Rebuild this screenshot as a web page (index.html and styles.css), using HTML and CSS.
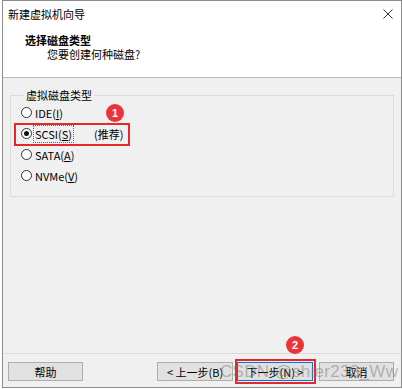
FILE: index.html
```html
<!DOCTYPE html>
<html lang="zh-CN">
<head>
<meta charset="utf-8">
<title>新建虚拟机向导</title>
<link rel="stylesheet" href="styles.css">
</head>
<body>
<div class="window">
  <div class="header">
    <div class="titlebar">
      <span class="title">新建虚拟机向导</span>
      <svg class="close" width="10" height="10" viewBox="0 0 10 10"><path d="M0.5 0.5 L9.5 9.5 M9.5 0.5 L0.5 9.5" stroke="#333" stroke-width="1" fill="none"/></svg>
    </div>
    <div class="heading">选择磁盘类型</div>
    <div class="subheading">您要创建何种磁盘?</div>
  </div>
  <div class="main">
    <fieldset class="group">
      <legend>虚拟磁盘类型</legend>
      <div class="row"><span class="radio"></span><span class="label">IDE(<u>I</u>)</span></div>
      <div class="row"><span class="radio checked"></span><span class="label focus">SCSI(<u>S</u>)</span><span class="rec">(推荐)</span></div>
      <div class="row"><span class="radio"></span><span class="label">SATA(<u>A</u>)</span></div>
      <div class="row"><span class="radio"></span><span class="label">NVMe(<u>V</u>)</span></div>
    </fieldset>
  </div>
  <div class="footer">
    <div class="btn help">帮助</div>
    <div class="spacer"></div>
    <div class="btn back">&lt; 上一步(B)</div>
    <div class="btn next">下一步(N) &gt;</div>
    <div class="btn cancel">取消</div>
  </div>
  <div class="mark mark1"></div>
  <div class="badge badge1">1</div>
  <div class="mark mark2"></div>
  <div class="badge badge2">2</div>
  <div class="watermark">CSDN @shier233_Ww</div>
</div>
</body>
</html>
```

FILE: styles.css
```css
html, body {
  margin: 0;
  padding: 0;
  background: #ffffff;
}

body {
  font-family: "Noto Sans CJK SC", "Noto Sans", sans-serif;
  font-size: 11px;
  color: #000;
}

.window {
  position: relative;
  margin-left: 2px;
  width: 398px;
  height: 386px;
  border: 1px solid #8c8c8c;
  background: #f0f0f0;
  display: flex;
  flex-direction: column;
  overflow: hidden;
}

.header {
  background: #ffffff;
  height: 76px;
  border-bottom: 1px solid #b9b9b9;
  flex: none;
}

.titlebar {
  height: 26px;
  display: flex;
  align-items: center;
  padding-left: 5px;
  padding-right: 8px;
}

.title {
  flex: 1;
  line-height: 26px;
}

.close {
  display: block;
}

.heading {
  margin-top: 6px;
  padding-left: 22px;
  line-height: 14px;
  font-weight: bold;
}

.subheading {
  padding-left: 44px;
  line-height: 14px;
}

.main {
  flex: 1;
  padding: 10px 7px 0 7px;
}

.group {
  margin: 0;
  padding: 0 0 10px 10px;
  border: 1px solid #dcdcdc;
  min-width: 0;
}

.group legend {
  margin-left: 3px;
  padding: 0 2px;
  line-height: 14px;
}

.row {
  height: 21px;
  display: flex;
  align-items: center;
}

.radio {
  width: 9px;
  height: 9px;
  border: 1px solid #333;
  border-radius: 50%;
  background: #fff;
  position: relative;
  flex: none;
}

.radio.checked::after {
  content: "";
  position: absolute;
  left: 2px;
  top: 2px;
  width: 5px;
  height: 5px;
  border-radius: 50%;
  background: #111;
}

.label {
  margin-left: 3px;
  line-height: 14px;
}

.label.focus {
  outline: 1px dotted #666;
  outline-offset: 1px;
}

.rec {
  margin-left: 22px;
}

.footer {
  flex: none;
  border-top: 1px solid #dadada;
  display: flex;
  align-items: flex-start;
  padding: 8px 7px 0 5px;
  box-sizing: border-box;
  height: 34px;
}

.spacer {
  flex: 1;
}

.btn {
  height: 19px;
  box-sizing: border-box;
  border: 1px solid #adadad;
  background: #e1e1e1;
  display: flex;
  align-items: center;
  justify-content: center;
  line-height: 16px;
}

.help {
  width: 75px;
}

.back {
  width: 76px;
}

.next {
  width: 76px;
  margin-left: 4px;
  border-color: #0078d7;
}

.cancel {
  width: 75px;
  margin-left: 6px;
}

.mark {
  position: absolute;
  border: 2px solid #e6272d;
  box-sizing: border-box;
}

.mark1 {
  left: 11px;
  top: 122px;
  width: 116px;
  height: 23px;
}

.mark2 {
  left: 232px;
  top: 358px;
  width: 81px;
  height: 25px;
}

.badge {
  position: absolute;
  width: 18px;
  height: 18px;
  border-radius: 50%;
  background: #e8343a;
  color: #fff;
  font-family: "Liberation Sans", sans-serif;
  font-weight: bold;
  font-size: 11px;
  line-height: 18px;
  text-align: center;
}

.badge1 {
  left: 103px;
  top: 103px;
}

.badge2 {
  left: 283px;
  top: 335px;
}

.watermark {
  position: absolute;
  left: 217px;
  top: 361px;
  font-family: "Liberation Sans", sans-serif;
  font-size: 17px;
  line-height: 20px;
  letter-spacing: 0.3px;
  color: rgba(110, 110, 110, 0.45);
  white-space: nowrap;
}
```
